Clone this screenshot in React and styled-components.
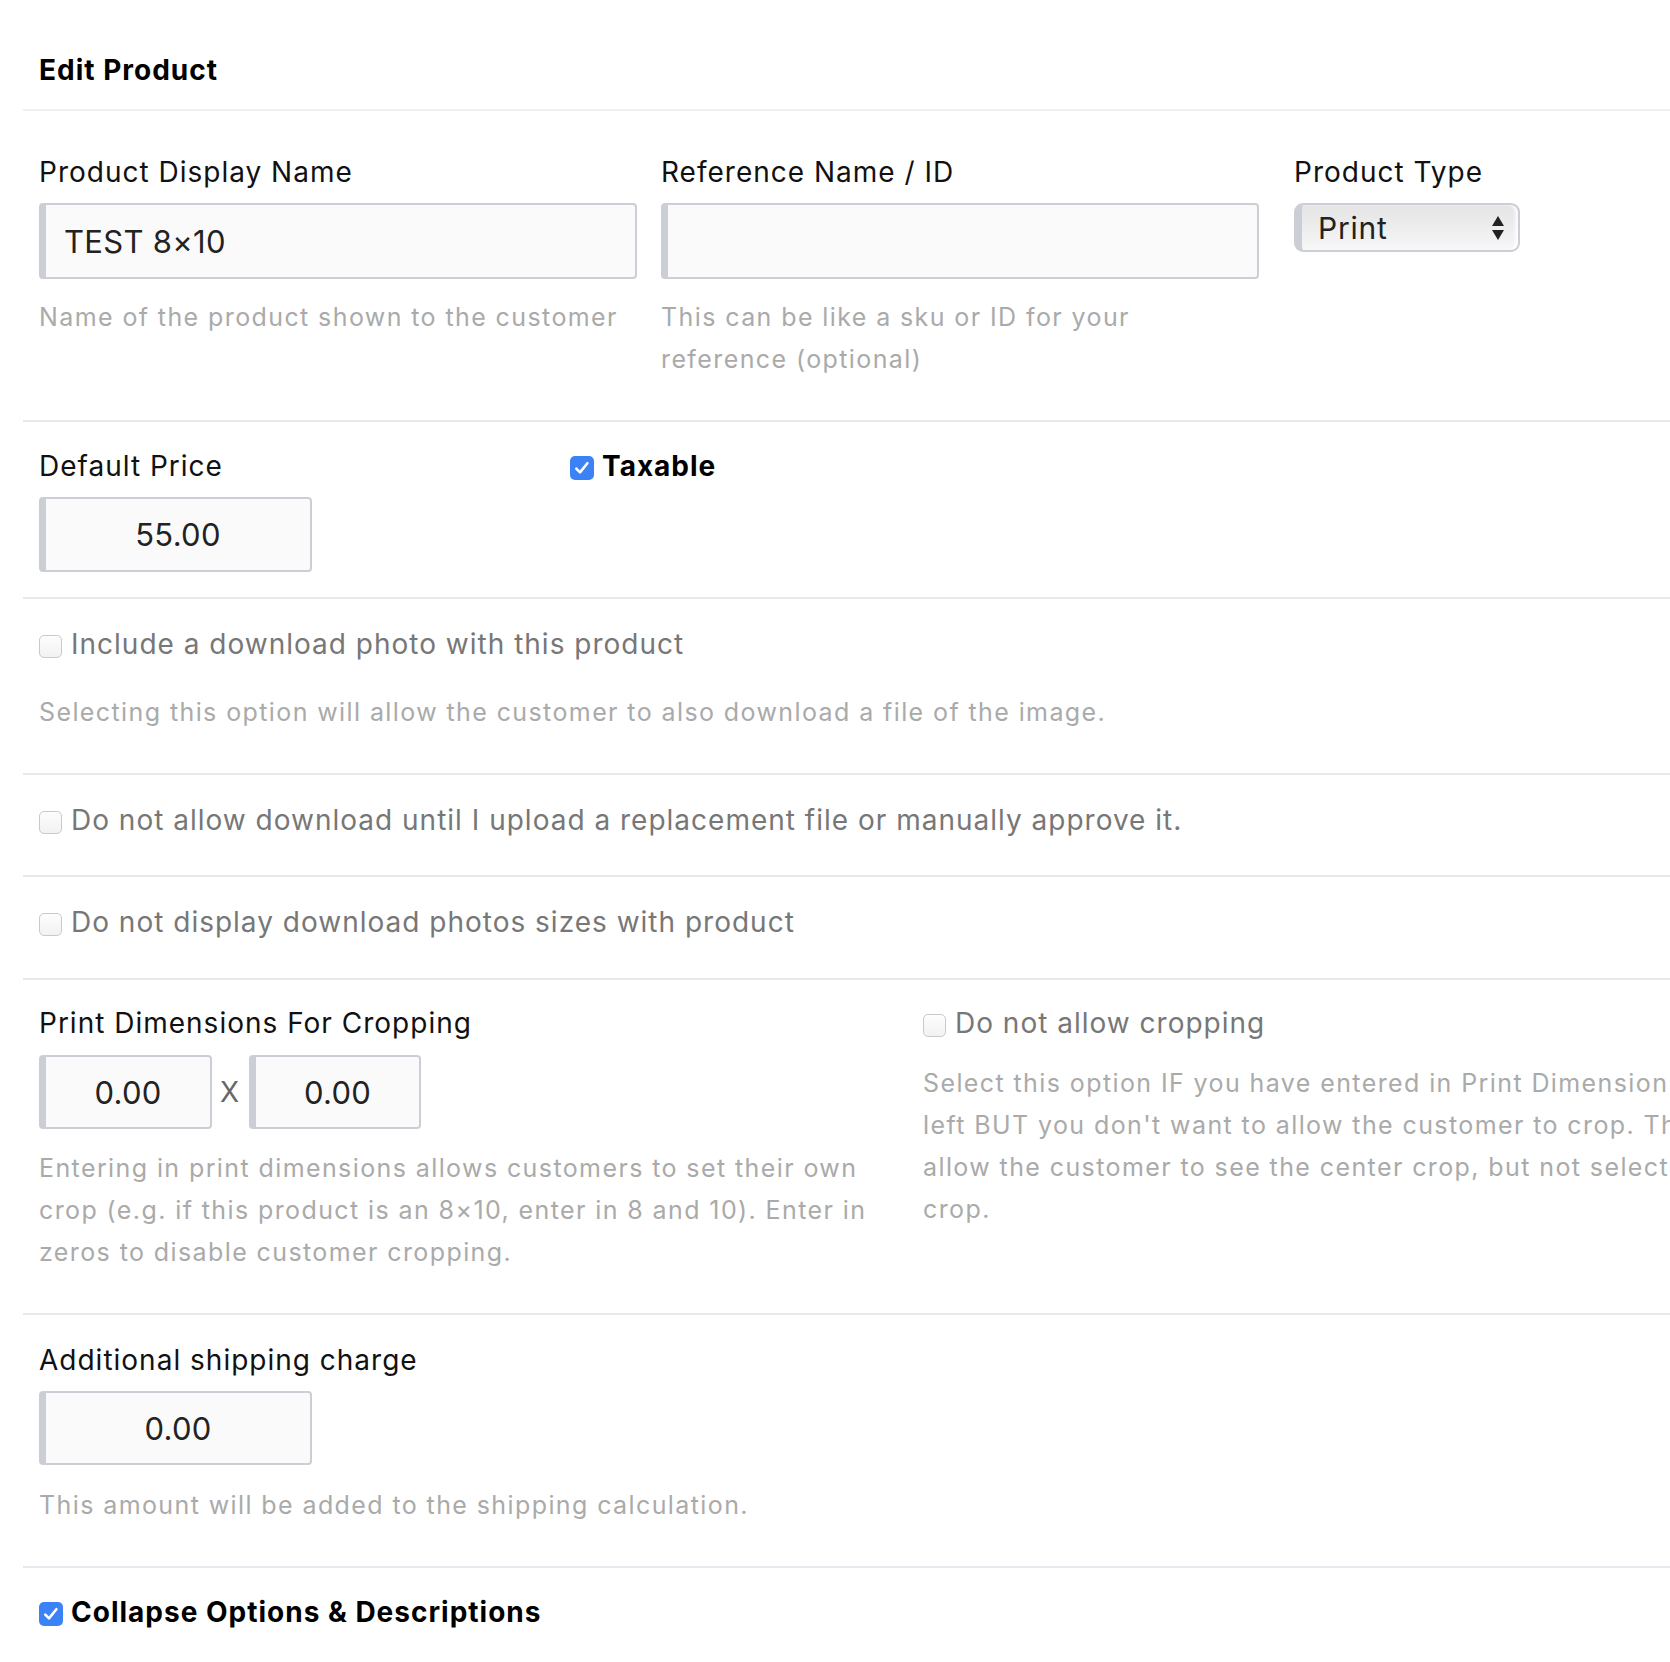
import React from 'react';
import styled, { createGlobalStyle } from 'styled-components';

const GlobalStyle = createGlobalStyle`
  html, body {
    margin: 0;
    padding: 0;
    background: #fff;
    overflow: hidden;
  }
  body {
    font-family: Inter, "Noto Sans", "Liberation Sans", sans-serif;
    color: #111;
  }
`;

const Page = styled.div`
  width: 1960px;
  padding-left: 23px;
  box-sizing: border-box;
`;

const Header = styled.h1`
  margin: 0;
  padding: 49px 16px 18px;
  font-size: 28px;
  line-height: 42px;
  font-weight: 700;
  letter-spacing: 1px;
  color: #000;
  border-bottom: 2px solid #f0f0f0;
`;

const Section = styled.section`
  padding: ${(p) => p.$top || 23}px 16px ${(p) => p.$bottom || 40}px;
  border-bottom: ${(p) => (p.$last ? 'none' : '2px solid #e6e9ed')};
`;

const Grid = styled.div`
  display: grid;
  grid-template-columns: ${(p) => p.$cols};
  column-gap: ${(p) => p.$gap || 0}px;
  align-items: start;
`;

const Label = styled.div`
  font-size: 28px;
  line-height: 42px;
  letter-spacing: 1px;
  color: #111;
  margin-bottom: ${(p) => p.$mb || 10}px;
`;

const Help = styled.p`
  margin: ${(p) => p.$mt || 18}px 0 0;
  font-size: 25px;
  line-height: 42px;
  letter-spacing: 1.4px;
  color: #aaaaaa;
  max-width: ${(p) => (p.$max ? `${p.$max}px` : 'none')};
`;

const TextInput = styled.input`
  box-sizing: border-box;
  width: ${(p) => p.$w}px;
  height: ${(p) => p.$h || 76}px;
  padding: 0 18px;
  font-family: inherit;
  font-size: 31px;
  letter-spacing: 0.3px;
  color: #222;
  text-align: ${(p) => (p.$center ? 'center' : 'left')};
  background: #fafafa;
  border: 2px solid #cbcfd5;
  border-left-width: 7px;
  border-radius: 4px;
  outline: none;
  display: block;
`;

const Select = styled.div`
  box-sizing: border-box;
  width: 226px;
  height: 49px;
  display: flex;
  align-items: center;
  justify-content: space-between;
  padding: 0 12px 0 16px;
  font-size: 30px;
  letter-spacing: 0.8px;
  color: #222;
  background: linear-gradient(#e4e4e4, #eeeeee 55%, #f7f7f7);
  border: 2px solid #cbcfd5;
  border-left-width: 8px;
  border-radius: 9px;
  box-shadow: inset -3px 0 3px rgba(255, 255, 255, 0.8);
`;

const Arrows = styled.svg`
  width: 16px;
  height: 30px;
  display: block;
`;

const CheckRow = styled.label`
  display: flex;
  align-items: center;
  gap: ${(p) => (p.$checked ? 8 : 9)}px;
  font-size: 28px;
  line-height: 42px;
  letter-spacing: 1px;
  font-weight: ${(p) => (p.$bold ? 700 : 400)};
  color: ${(p) => (p.$bold ? '#000' : '#777')};
`;

const Box = styled.span`
  box-sizing: border-box;
  flex: none;
  width: ${(p) => (p.$checked ? 24 : 23)}px;
  height: ${(p) => (p.$checked ? 24 : 23)}px;
  border-radius: 5px;
  background: ${(p) => (p.$checked ? '#3b82f6' : 'linear-gradient(#fdfdfd, #f2f2f2)')};
  border: ${(p) => (p.$checked ? 'none' : '1.5px solid #c9c9c9')};
  display: flex;
  align-items: center;
  justify-content: center;
  margin-top: 4px;
`;

const DimRow = styled.div`
  display: flex;
  align-items: center;
`;

const Times = styled.span`
  font-size: 28px;
  color: #666;
  margin: 0 10px 0 8px;
`;

const Check = ({ checked }) => (
  <Box $checked={checked}>
    {checked && (
      <svg width="20" height="20" viewBox="0 0 20 20">
        <path
          d="M4.3 10.6 L8 14.4 L15.4 5.2"
          fill="none"
          stroke="#fff"
          strokeWidth="2.6"
          strokeLinecap="round"
          strokeLinejoin="round"
        />
      </svg>
    )}
  </Box>
);

const CheckOption = ({ checked, bold, children }) => (
  <CheckRow $checked={checked} $bold={bold}>
    <Check checked={checked} />
    <span>{children}</span>
  </CheckRow>
);

export default function App() {
  return (
    <>
      <GlobalStyle />
      <Page>
        <Header>Edit Product</Header>

        <Section $top={40}>
          <Grid $cols="622px 633px 1fr">
            <div>
              <Label>Product Display Name</Label>
              <TextInput $w={598} defaultValue="TEST 8×10" />
              <Help $mt={17}>Name of the product shown to the customer</Help>
            </div>
            <div>
              <Label>Reference Name / ID</Label>
              <TextInput $w={598} defaultValue="" />
              <Help $mt={17} $max={540}>
                This can be like a sku or ID for your reference (optional)
              </Help>
            </div>
            <div>
              <Label>Product Type</Label>
              <Select>
                <span>Print</span>
                <Arrows viewBox="0 0 16 30">
                  <path d="M8 3 L14 13 L2 13 Z" fill="#222" />
                  <path d="M2 17 L14 17 L8 27 Z" fill="#222" />
                </Arrows>
              </Select>
            </div>
          </Grid>
        </Section>

        <Section $bottom={25}>
          <Grid $cols="531px 1fr">
            <div>
              <Label>Default Price</Label>
              <TextInput $w={273} $h={75} $center defaultValue="55.00" />
            </div>
            <div>
              <CheckOption checked bold>
                Taxable
              </CheckOption>
            </div>
          </Grid>
        </Section>

        <Section $top={24} $bottom={40}>
          <CheckOption>Include a download photo with this product</CheckOption>
          <Help $mt={26}>
            Selecting this option will allow the customer to also download a file of the image.
          </Help>
        </Section>

        <Section $top={24} $bottom={34}>
          <CheckOption>
            Do not allow download until I upload a replacement file or manually approve it.
          </CheckOption>
        </Section>

        <Section $top={24} $bottom={35}>
          <CheckOption>Do not display download photos sizes with product</CheckOption>
        </Section>

        <Section $top={22} $bottom={40}>
          <Grid $cols="880px 1000px" $gap={4}>
            <div>
              <Label $mb={11}>Print Dimensions For Cropping</Label>
              <DimRow>
                <TextInput $w={173} $h={74} $center defaultValue="0.00" />
                <Times>X</Times>
                <TextInput $w={172} $h={74} $center defaultValue="0.00" />
              </DimRow>
              <Help>
                Entering in print dimensions allows customers to set their own crop (e.g. if this
                product is an 8×10, enter in 8 and 10). Enter in zeros to disable customer cropping.
              </Help>
            </div>
            <div>
              <CheckOption>Do not allow cropping</CheckOption>
              <Help>
                Select this option IF you have entered in Print Dimensions to the
                <br />
                left BUT you don't want to allow the customer to crop. This will
                <br />
                allow the customer to see the center crop, but not select their own
                <br />
                crop.
              </Help>
            </div>
          </Grid>
        </Section>

        <Section $top={24} $bottom={40}>
          <Label>Additional shipping charge</Label>
          <TextInput $w={273} $h={74} $center defaultValue="0.00" />
          <Help $mt={19}>This amount will be added to the shipping calculation.</Help>
        </Section>

        <Section $top={23} $last>
          <CheckOption checked bold>
            Collapse Options &amp; Descriptions
          </CheckOption>
        </Section>
      </Page>
    </>
  );
}
